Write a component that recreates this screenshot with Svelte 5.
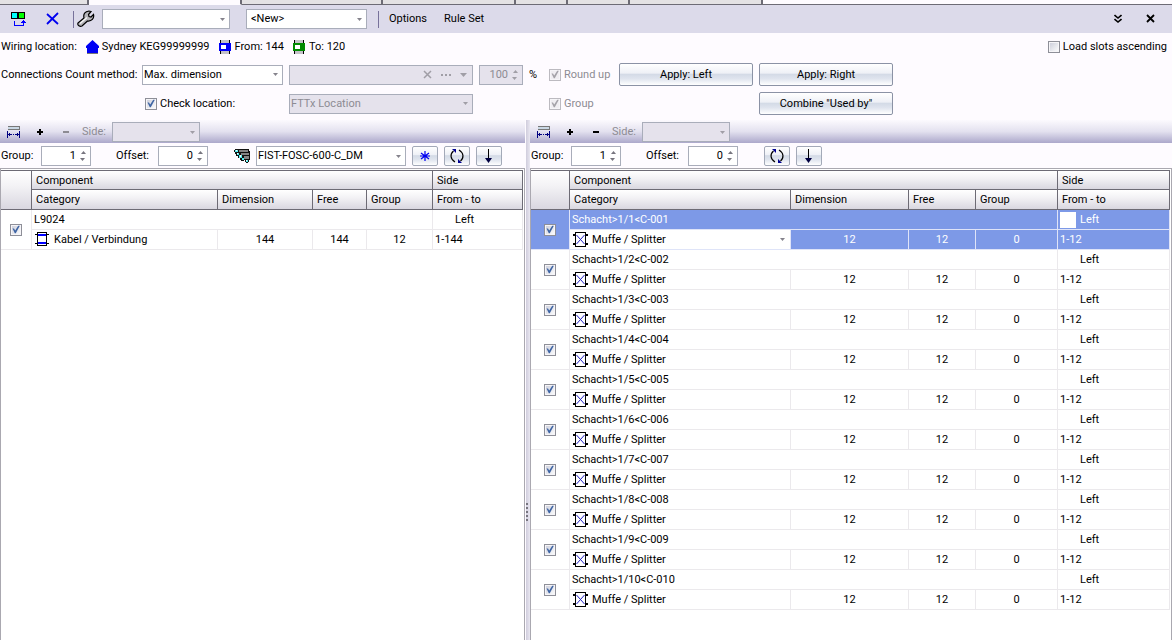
<script lang="ts">
	type Slot = {
		name: string;
		category: string;
		dimension: number;
		free: number;
		group: number;
		range: string;
		checked: boolean;
	};

	type Pane = {
		id: string;
		group: string;
		offset: string;
		closure: string;
		canRemove: boolean;
		selected: number;
		slots: Slot[];
	};

	const TABS = [89, 153, 141, 133, 52, 62, 133];

	const splitters: Slot[] = Array.from({ length: 10 }, (_, i) => ({
		name: `Schacht>1/${i + 1}<C-${String(i + 1).padStart(3, '0')}`,
		category: 'Muffe / Splitter',
		dimension: 12,
		free: 12,
		group: 0,
		range: '1-12',
		checked: true
	}));

	let panes: Pane[] = [
		{
			id: 'left',
			group: '1',
			offset: '0',
			closure: 'FIST-FOSC-600-C_DM',
			canRemove: false,
			selected: -1,
			slots: [
				{
					name: 'L9024',
					category: 'Kabel / Verbindung',
					dimension: 144,
					free: 144,
					group: 12,
					range: '1-144',
					checked: true
				}
			]
		},
		{
			id: 'right',
			group: '1',
			offset: '0',
			closure: '',
			canRemove: true,
			selected: 0,
			slots: splitters
		}
	];

	let percent = '100';
	let checkLocation = true;
	let roundUp = true;
	let groupSlots = true;
	let ascending = false;

	const step = (value: string, by: number) => String(Math.max(0, Number(value) + by));
</script>

{#snippet arrow()}
	<svg class="arrow" width="5" height="3" viewBox="0 0 5 3"><path d="M0 0h5L2.5 3z" fill="currentColor" /></svg>
{/snippet}

{#snippet upDown()}
	<svg width="5" height="3" viewBox="0 0 5 3"><path d="M0 3h5L2.5 0z" fill="currentColor" /></svg>
{/snippet}

<div class="app">
	<div class="tab-strip">
		{#each TABS as width, i}
			<div class="tab" class:active={i === 1} style="width: {width}px"></div>
		{/each}
		<div class="tab-rest"></div>
	</div>

	<div class="toolbar">
		<button class="tool" aria-label="Swap">
			<svg width="16" height="16" viewBox="0 0 16 16" shape-rendering="crispEdges">
				<path d="M1 1h7v7H1zM8 1h7v7H8z" fill="#000" />
				<path d="M2 2h5v5H2z" fill="#0ff" />
				<path d="M9 2h5v5H9z" fill="#0f0" />
				<path d="M4 10h1v4h8v-4h1v5H4zM13 9h1v1h-1zM12 10h3v1h-3zM11 11h5v1h-5z" fill="#00f" />
			</svg>
		</button>
		<button class="tool delete" aria-label="Delete">
			<svg width="14" height="14" viewBox="0 0 14 14">
				<path d="M1 2l11 10M12 1L1 12" fill="none" stroke="#0000f0" stroke-width="1.8" />
			</svg>
		</button>
		<span class="separator"></span>
		<button class="tool wrench" aria-label="Settings">
			<svg width="18" height="18" viewBox="0 0 18 18">
				<path
					d="M1 13l6-5c-1-4 1-6.500 5-7l2 .5-2.500 3 .5 2 2 .5 2.500-2.500c1 4-2 7-6 6.500l-5.500 5c-2 1-5-.5-4-3z"
					fill="#b5b4b9"
					stroke="#000"
					stroke-width="1.200"
				/>
				<path d="M3 13.500l7-6" stroke="#f4f4f4" stroke-width="1.400" />
			</svg>
		</button>
		<span class="drop profile">
			<select aria-label="Profile"><option></option></select>
			{@render arrow()}
		</span>
		<span class="drop template">
			<select aria-label="Template"><option>&lt;New&gt;</option></select>
			{@render arrow()}
		</span>
		<span class="separator"></span>
		<button class="text-tool">Options</button>
		<button class="text-tool">Rule Set</button>
		<div class="window-tools">
			<button class="tool" aria-label="Collapse">
				<svg width="8" height="10" viewBox="0 0 8 10">
					<path d="M.5 1L4 4l3.500-3M.5 5L4 8l3.500-3" fill="none" stroke="#000" stroke-width="1.600" />
				</svg>
			</button>
			<button class="tool" aria-label="Close">
				<svg width="10" height="10" viewBox="0 0 10 10">
					<path d="M1 1l7 7M8 1L1 8" fill="none" stroke="#000" stroke-width="1.800" />
				</svg>
			</button>
		</div>
	</div>

	<div class="location">
		<span class="caption">Wiring location:</span>
		<span class="place">
			<svg width="13" height="14" viewBox="0 0 13 14">
				<path d="M6.500 0L13 6v2h-1v5H1V8H0V6z" fill="#0000f4" />
				<path d="M1 13.500h11" stroke="#777" />
			</svg>
			Sydney KEG99999999
		</span>
		{#each [{ text: 'From: 144', color: '#0000f8' }, { text: 'To: 120', color: '#008a00' }] as end}
			<span class="place">
				<svg width="13" height="14" viewBox="0 0 13 14" shape-rendering="crispEdges">
					<path d="M2 0h9v14H2z" fill="#c4c2c8" />
					<path d="M1 0h1v14H1zM10 0h1v14h-1z" fill="#000" />
					<path d="M0 3h12v8H0z" fill={end.color} />
					<path d="M2 5h5v4H2z" fill="#fff" />
				</svg>
				{end.text}
			</span>
		{/each}
		<label class="check ascending">
			<input type="checkbox" bind:checked={ascending} />
			Load slots ascending
		</label>
	</div>

	<div class="options">
		<label class="caption" for="count-method">Connections Count method:</label>
		<span class="drop">
			<select id="count-method"><option>Max. dimension</option></select>
			{@render arrow()}
		</span>
		<span class="drop disabled">
			<select aria-label="Attribute" disabled><option></option></select>
			<svg class="marks" width="48" height="9" viewBox="0 0 48 9" fill="currentColor">
				<path d="M1 1l7 7M8 1L1 8" stroke="currentColor" stroke-width="1.500" />
				<path d="M18 4h2v2h-2zM22 4h2v2h-2zM26 4h2v2h-2zM37 3h7l-3.500 4z" />
			</svg>
		</span>
		<div class="percent">
			<span class="spin disabled">
				<input type="text" inputmode="numeric" aria-label="Percent" disabled bind:value={percent} />
				<span class="steps">
					<button disabled aria-label="More">{@render upDown()}</button>
					<button class="down" disabled aria-label="Less">{@render upDown()}</button>
				</span>
			</span>
			%
		</div>
		<label class="check off">
			<input type="checkbox" disabled bind:checked={roundUp} />
			Round up
		</label>
		<button class="push">Apply: Left</button>
		<button class="push">Apply: Right</button>

		<label class="check by-location">
			<input type="checkbox" bind:checked={checkLocation} />
			Check location:
		</label>
		<span class="drop disabled">
			<select aria-label="Location type" disabled><option>FTTx Location</option></select>
			{@render arrow()}
		</span>
		<label class="check off group-slots">
			<input type="checkbox" disabled bind:checked={groupSlots} />
			Group
		</label>
		<button class="push combine">Combine "Used by"</button>
	</div>

	<div class="panes">
		{#each panes as pane, p}
			{#if p > 0}
				<div class="splitter">
					<svg width="4" height="19" viewBox="0 0 4 19" shape-rendering="crispEdges">
						<path
							d="M1 0h2v2H1zM1 4h2v2H1zM1 8h2v2H1zM1 12h2v2H1zM1 16h2v2H1z"
							fill="#77757f"
						/>
					</svg>
				</div>
			{/if}
			<section class="pane {pane.id}">
				<div class="pane-bar">
					<button class="tool" aria-label="Fit columns">
						<svg width="13" height="12" viewBox="0 0 13 12" shape-rendering="crispEdges">
							<path d="M1 0h12v4H1z" fill="#777" />
							<path d="M1 1h11v2H1z" fill="#c9d7e4" />
							<path d="M0 5h1v7H0zM12 5h1v7h-1zM1 8h4v1H1zM8 8h4v1H8zM6 8h1v1H6zM2 7h1v3H2zM10 7h1v3h-1z" fill="#000080" />
						</svg>
					</button>
					<button class="tool" aria-label="Add">
						<svg width="6" height="6" viewBox="0 0 6 6"><path d="M2 0h2v2h2v2H4v2H2V4H0V2h2z" /></svg>
					</button>
					<button class="tool" aria-label="Remove" disabled={!pane.canRemove}>
						<svg width="6" height="6" viewBox="0 0 6 6"><path d="M0 2h6v2H0z" fill="currentColor" /></svg>
					</button>
					<label class="side off" for="side-{pane.id}">Side:</label>
					<span class="drop disabled">
						<select id="side-{pane.id}" disabled><option></option></select>
						{@render arrow()}
					</span>
				</div>

				<div class="controls">
					<label for="group-{pane.id}">Group:</label>
					<span class="spin">
						<input id="group-{pane.id}" type="text" inputmode="numeric" bind:value={pane.group} />
						<span class="steps">
							<button aria-label="More" on:click={() => (pane.group = step(pane.group, 1))}>{@render upDown()}</button>
							<button class="down" aria-label="Less" on:click={() => (pane.group = step(pane.group, -1))}>{@render upDown()}</button>
						</span>
					</span>
					<label class="offset" for="offset-{pane.id}">Offset:</label>
					<span class="spin">
						<input id="offset-{pane.id}" type="text" inputmode="numeric" bind:value={pane.offset} />
						<span class="steps">
							<button aria-label="More" on:click={() => (pane.offset = step(pane.offset, 1))}>{@render upDown()}</button>
							<button class="down" aria-label="Less" on:click={() => (pane.offset = step(pane.offset, -1))}>{@render upDown()}</button>
						</span>
					</span>
					<div class="actions">
						{#if pane.closure}
							<svg width="16" height="16" viewBox="0 0 16 16">
								<path d="M1 1h14v2h1v9h-1v2h-1v1h-2v-1h-1v-2h-1v1H7v-1H6v-2H4V8H2V6H1V4H0V2h1z" fill="#111" />
								<path d="M5 2h9v2H5zM7 5h8v2H7zM10 8h5v3h-5z" fill="#858585" />
								<path d="M1 2h3v2H1zM3 5h2v2H3zM5 7h3v3H5zM8 10h2v2H8zM12 12h2v2h-2z" fill="#5ee" />
								<path d="M2 2h1v1H2zM3 5h1v1H3zM6 7h1v2H6zM12 12h1v1h-1z" fill="#fff" />
							</svg>
							<span class="drop closure">
								<select aria-label="Closure"><option>{pane.closure}</option></select>
								{@render arrow()}
							</span>
							<button class="push small" aria-label="New">
								<svg width="10" height="10" viewBox="0 0 10 10">
									<path d="M5 0v10M1 2l8 6M9 2L1 8M0 5h10" stroke="#0000f0" stroke-width="1.200" />
								</svg>
							</button>
						{/if}
						<button class="push small" aria-label="Rotate">
							<svg width="14" height="14" viewBox="0 0 14 14">
								<path d="M5 13C0 10 0 5 3.500 2M9 1c5 3 5 8 1.500 11" fill="none" stroke="#000" stroke-width="1.200" />
								<path d="M2 0h4v4zM12 14H8v-4z" fill="#000090" />
							</svg>
						</button>
						<button class="push small" aria-label="Move down">
							<svg width="8" height="14" viewBox="0 0 8 14">
								<path d="M3.500 0v10" stroke="#000" />
								<path d="M0 9h7l-3.500 5z" fill="#000040" />
							</svg>
						</button>
					</div>
				</div>

				<div class="grid">
					<table>
						<colgroup>
							<col class="c-check" />
							<col />
							<col class="c-dimension" />
							<col class="c-free" />
							<col class="c-group" />
							<col class="c-side" />
						</colgroup>
						<thead>
							<tr>
								<th rowspan="2"></th>
								<th colspan="4">Component</th>
								<th>Side</th>
							</tr>
							<tr>
								<th>Category</th>
								<th>Dimension</th>
								<th>Free</th>
								<th>Group</th>
								<th>From - to</th>
							</tr>
						</thead>
						{#each pane.slots as slot, i}
							<tbody class:selected={pane.selected === i}>
								<tr>
									<td class="mark" rowspan="2">
										<input type="checkbox" aria-label={slot.name} bind:checked={slot.checked} />
									</td>
									<td colspan="4">{slot.name}</td>
									<td>
										<div class="slot-side"><span class="swatch"></span>Left</div>
									</td>
								</tr>
								<tr>
									<td class="category">
										<div class="kind">
											{#if pane.id === 'left'}
												<svg width="15" height="15" viewBox="0 0 15 15" shape-rendering="crispEdges">
													<path d="M2 0h10v14H2z" />
													<path d="M0 2h14v1H0zM0 11h14v1H0z" />
													<path d="M3 1h8v12H3z" fill="#fff" />
													<path d="M3 2h8v2H3zM3 10h8v2H3z" fill="#00f" />
												</svg>
											{:else}
												<svg width="15" height="15" viewBox="0 0 15 15" shape-rendering="crispEdges">
													<path d="M2 0h11v15H2zM0 2h2v2H0zM13 2h2v2h-2zM0 11h2v2H0zM13 11h2v2h-2z" />
													<path d="M3 1h9v13H3z" fill="#fff" />
													<path d="M3.500 3l8 9M11.500 3l-8 9" stroke="#2222c8" shape-rendering="auto" />
												</svg>
											{/if}
											{#if pane.selected === i}
												<span class="drop bare">
													<select aria-label="Category"><option>{slot.category}</option></select>
													{@render arrow()}
												</span>
											{:else}
												{slot.category}
											{/if}
										</div>
									</td>
									<td class="number">{slot.dimension}</td>
									<td class="number">{slot.free}</td>
									<td class="number">{slot.group}</td>
									<td>{slot.range}</td>
								</tr>
							</tbody>
						{/each}
					</table>
				</div>
			</section>
		{/each}
	</div>
</div>

<style>
	:global(body) {
		background: #fefbff;
	}

	.app {
		display: flex;
		flex-direction: column;
		min-height: 100vh;
		color: #000;
		font: 11px/14px Roboto, sans-serif;
		white-space: nowrap;
	}

	button,
	select,
	input {
		margin: 0;
		padding: 0;
		border: 0;
		border-radius: 0;
		background: none;
		color: inherit;
		font: inherit;
	}

	svg {
		display: block;
		flex: none;
	}

	.tab-strip {
		display: flex;
		height: 5px;
	}

	.tab {
		box-sizing: border-box;
		border: solid #6d6b75;
		border-width: 0 2px 1px 0;
		background: #e4e2e4;
	}

	.tab.active {
		border-bottom-color: #fefbff;
		background: #fefbff;
	}

	.tab-rest {
		flex: 1;
		border-bottom: 1px solid #6d6b75;
	}

	.toolbar {
		display: flex;
		align-items: center;
		height: 28px;
		padding: 0 16px 0 10px;
		background: #dcdaea;
	}

	.delete {
		margin: 0 13px 0 20px;
	}

	.wrench {
		margin: 0 7px 0 3px;
	}

	.separator {
		width: 1px;
		height: 17px;
		background: #77719a;
	}

	.profile {
		width: 128px;
		margin-right: 16px;
	}

	.template {
		width: 121px;
		margin-right: 11px;
	}

	.text-tool {
		margin-left: 10px;
		margin-right: 7px;
	}

	.window-tools {
		display: flex;
		gap: 24px;
		margin-left: auto;
	}

	.drop {
		position: relative;
		display: block;
		height: 20px;
	}

	.drop select {
		display: block;
		box-sizing: border-box;
		width: 100%;
		height: 100%;
		padding: 0 16px 0 1px;
		border: 1px solid #a9adba;
		background: #fff;
		appearance: none;
	}

	.drop .arrow,
	.marks {
		position: absolute;
		top: 0;
		right: 5px;
		bottom: 0;
		margin: auto;
		color: #85838c;
		pointer-events: none;
	}

	.drop .marks {
		right: 2px;
	}

	.drop.disabled select,
	.spin.disabled {
		background: #e5e2ec;
		color: #8d8b93;
		opacity: 1;
	}

	.drop.disabled .arrow,
	.drop.disabled .marks {
		color: #a09ea6;
	}

	.template select {
		padding-left: 4px;
	}

	.spin {
		display: flex;
		box-sizing: border-box;
		width: 50px;
		height: 20px;
		border: 1px solid #a9adba;
		background: #fff;
	}

	.spin input {
		flex: 1;
		width: 0;
		text-align: right;
	}

	.steps {
		display: flex;
		flex-direction: column;
		justify-content: space-evenly;
		width: 14px;
		color: #77757f;
	}

	.steps button {
		display: flex;
		justify-content: center;
	}

	.steps .down {
		transform: rotate(180deg);
	}

	.disabled .steps {
		color: #a09ea6;
	}

	input[type='checkbox'] {
		display: block;
		flex: none;
		box-sizing: border-box;
		width: 12px;
		height: 12px;
		border: 1px solid #8e8f98;
		background: linear-gradient(135deg, #c9cbd8, #fff);
		box-shadow: inset 0 0 0 1px #f6f5f8;
		appearance: none;
	}

	input[type='checkbox']:checked::before {
		content: '';
		display: block;
		width: 10px;
		height: 10px;
		background: #3f65a4;
		clip-path: polygon(15% 40%, 30% 40%, 42% 60%, 72% 12%, 88% 12%, 48% 88%, 38% 88%);
	}

	input[type='checkbox']:disabled {
		border-color: #bcbac0;
		background: #f0eef2;
	}

	input[type='checkbox']:disabled::before {
		background: #a5a3a9;
	}

	.check {
		display: flex;
		align-items: center;
		gap: 3px;
	}

	.off {
		color: #8d8b93;
	}

	.location {
		display: flex;
		align-items: center;
		gap: 9px;
		height: 26px;
		padding: 1px 5px 0 1px;
	}

	.place {
		display: flex;
		align-items: center;
		gap: 3px;
	}

	.ascending {
		margin-left: auto;
	}

	.options {
		display: grid;
		grid-template-columns: 135px 141px 184px 64px 64px 134px 134px;
		grid-auto-rows: 29px;
		align-items: center;
		column-gap: 6px;
		padding: 0 0 2px 1px;
	}

	.percent {
		display: flex;
		align-items: center;
		gap: 6px;
	}

	.percent .spin {
		width: 44px;
	}

	.by-location {
		grid-column: 2;
		padding-left: 3px;
	}

	.group-slots {
		grid-column: 5;
	}

	.combine {
		grid-column: 7;
	}

	.push {
		height: 23px;
		border: 1px solid #8b92a5;
		border-radius: 2px;
		background: linear-gradient(#fff, #eef0f6 44%, #d3dae6 48%, #dfe4ee 70%, #fff);
	}

	.push.small {
		display: flex;
		align-items: center;
		justify-content: center;
		width: 26px;
		height: 20px;
		border-color: #a3a9b8;
	}

	.panes {
		display: grid;
		flex: 1;
		grid-template-columns: 525fr 5px 642fr;
	}

	.splitter {
		display: flex;
		align-items: center;
		padding-top: 264px;
		box-sizing: border-box;
		background: linear-gradient(90deg, #fefbff 1px, #cfccdc 1px, #e9e7f1);
	}

	.pane {
		display: flex;
		flex-direction: column;
		min-width: 0;
	}

	.pane-bar {
		display: flex;
		align-items: center;
		height: 22px;
		padding: 1px 0 0 7px;
		background: linear-gradient(#fcfafe, #e3e1ef 50%, #aca8cb);
	}

	.pane-bar .tool {
		margin-right: 17px;
	}

	.pane-bar .tool + .tool {
		margin-right: 20px;
	}

	.pane-bar .tool + .tool + .tool {
		margin-right: 13px;
	}

	.tool:disabled {
		color: #8d8b93;
	}

	.side {
		width: 30px;
	}

	.pane-bar .drop {
		width: 88px;
	}

	.controls {
		display: flex;
		align-items: center;
		height: 24px;
		padding: 1px 0 0 1px;
	}

	.controls label {
		width: 40px;
	}

	.controls .offset {
		width: 42px;
		margin-left: 25px;
	}

	.actions {
		display: flex;
		align-items: center;
		gap: 6px;
		margin-left: 26px;
	}

	.closure {
		width: 150px;
	}

	.grid {
		flex: 1;
		padding: 1px 1px 0 0;
		border: 1px solid #aaa8b0;
		border-width: 1px 1px 0 1px;
		background: #fff;
	}

	table {
		width: 100%;
		border-spacing: 0;
		table-layout: fixed;
	}

	.c-check {
		width: 31px;
	}

	.c-dimension {
		width: 95px;
	}

	.c-free {
		width: 54px;
	}

	.c-group {
		width: 66px;
	}

	.c-side {
		width: 90px;
	}

	.right .c-check {
		width: 39px;
	}

	.right .c-dimension {
		width: 118px;
	}

	.right .c-free {
		width: 67px;
	}

	.right .c-group {
		width: 82px;
	}

	.right .c-side {
		width: 112px;
	}

	th,
	td {
		box-sizing: border-box;
		height: 20px;
		padding: 0 2px;
		border: solid #ebe9ec;
		border-width: 0 1px 1px 0;
		font-weight: normal;
		text-align: left;
	}

	th {
		padding: 1px 2px 0 4px;
		border-color: #6d6b75;
		background: linear-gradient(#fff, #f3f2f5 40%, #d9d7e0);
	}

	tr:first-child th {
		border-top-width: 1px;
	}

	.mark input {
		margin: 0 auto;
	}

	.number {
		text-align: center;
	}

	.kind,
	.slot-side {
		display: flex;
		align-items: center;
		gap: 4px;
	}

	.kind {
		padding-left: 1px;
	}

	.swatch {
		width: 16px;
		height: 16px;
		background: #fff;
	}

	.bare {
		flex: 1;
		height: 18px;
	}

	.bare select {
		padding-left: 0;
		border: 0;
	}

	.drop.bare .arrow {
		right: 3px;
	}

	.selected td {
		border-color: #dfe4f8;
		background: #7d99e7;
		color: #fff;
	}

	.selected .category {
		background: #fff;
		color: #000;
	}
</style>
